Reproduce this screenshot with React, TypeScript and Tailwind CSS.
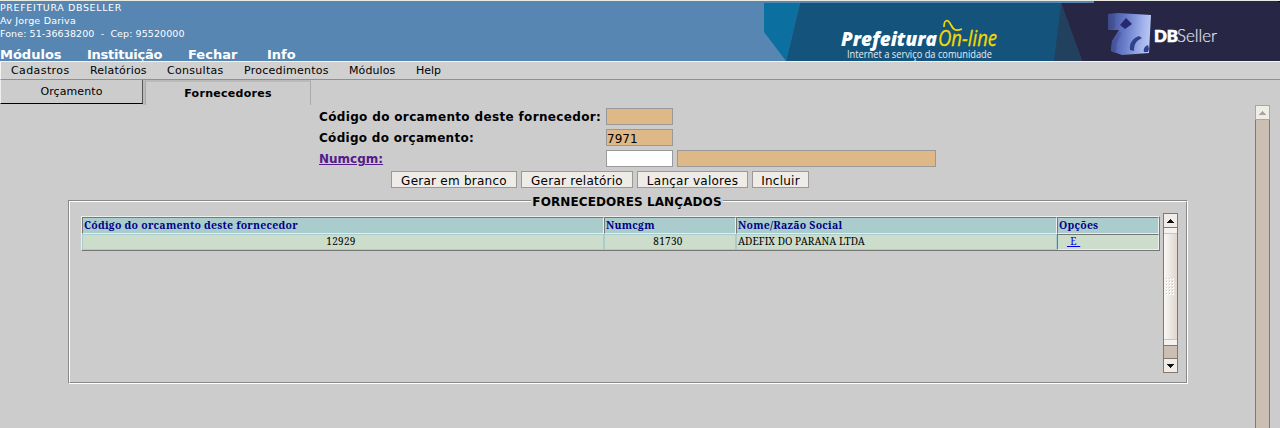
import React from "react";

const modules: [string, string][] = [
  ["Módulos", "w-[87px]"],
  ["Instituição", "w-[101px] tracking-[-0.25px]"],
  ["Fechar", "w-[79px]"],
  ["Info", "w-[60px]"],
];

const menu: [string, string][] = [
  ["Cadastros", "w-[79px] tracking-[0.4px]"],
  ["Relatórios", "w-[77px] tracking-[0.2px]"],
  ["Consultas", "w-[77px] tracking-[0.3px]"],
  ["Procedimentos", "w-[105px] tracking-[0.25px]"],
  ["Módulos", "w-[67px] tracking-[0.1px]"],
  ["Help", "w-[50px]"],
];

const buttons: [string, string][] = [
  ["Gerar em branco", "w-[126px]"],
  ["Gerar relatório", "w-[112px]"],
  ["Lançar valores", "w-[111px]"],
  ["Incluir", "w-[57px]"],
];

function Banner() {
  return (
    <svg width="516" height="60" viewBox="764 1 516 60" className="block shrink-0">
      <defs>
        <linearGradient id="cube" x1="0" y1="0.3" x2="1" y2="0.4">
          <stop offset="0" stopColor="#3f4c9a" />
          <stop offset="0.45" stopColor="#6c80cc" />
          <stop offset="0.85" stopColor="#a8b8ee" />
          <stop offset="1" stopColor="#b9c8f5" />
        </linearGradient>
        <linearGradient id="side" x1="0" y1="0" x2="1" y2="0">
          <stop offset="0" stopColor="#3c4888" />
          <stop offset="1" stopColor="#5565b4" />
        </linearGradient>
      </defs>
      <path d="M764 3H800L786 61L764 32Z" fill="#0b709f" />
      <path d="M800 3H1061L1082 61H786Z" fill="#14547c" />
      <path d="M1061 3L1054 61H1082Z" fill="#22415f" />
      <path d="M1061 3H1094V1H1280V61H1082Z" fill="#272645" />
      <path d="M1278 1H1280V2H1278Z" fill="#000" />
      <path d="M1108 14L1118 13L1151 15L1149 53L1122 55L1111 51L1112 41L1119 30L1108 30Z" fill="url(#cube)" />
      <path d="M1108 14L1115 15V29L1108 30ZM1112 41L1119 31L1122 33L1117 43L1116 53L1111 51Z" fill="url(#side)" />
      <path d="M1126 18L1132 24L1125 29L1120 25Z" fill="#262a6c" />
      <path d="M1133 50C1132 44 1135 39 1141 37" fill="none" stroke="#c0cdf6" strokeWidth="1.5" />
      <path d="M1130 50C1129 43 1133 38 1139 36L1142 38C1136 41 1134 44 1134 51ZM1144 52C1143 49 1145 46 1148 45L1149 49L1148 52Z" fill="#30418c" />
      <text x="841" y="46" textLength="96" lengthAdjust="spacingAndGlyphs" fill="#fff" fontFamily="Open Sans, sans-serif" fontWeight="800" fontStyle="italic" fontSize="20">Prefeitura</text>
      <text x="938" y="46" textLength="59" lengthAdjust="spacingAndGlyphs" fill="#f3d900" stroke="#f3d900" strokeWidth="0.3" fontFamily="Open Sans, sans-serif" fontStyle="italic" fontSize="21">On-line</text>
      <path d="M944 27C944 19 948 19 951 25C954 31 957 31 962 29" fill="none" stroke="#f3d900" strokeWidth="1.7" />
      <text x="847" y="58" textLength="145" lengthAdjust="spacingAndGlyphs" fill="#e4eef5" fontFamily="Open Sans, sans-serif" fontWeight="500" fontSize="10.5">Internet a serviço da comunidade</text>
      <text x="1154" y="42" textLength="24" lengthAdjust="spacingAndGlyphs" fill="#fff" stroke="#fff" strokeWidth="0.7" fontFamily="Lato, sans-serif" fontWeight="900" fontSize="17">DB</text>
      <text x="1177" y="42" textLength="40" lengthAdjust="spacingAndGlyphs" fill="#e2e2ea" stroke="#e2e2ea" strokeWidth="0.2" fontFamily="Lato, sans-serif" fontWeight="300" fontSize="17.5">Seller</text>
    </svg>
  );
}

function Arrow({ down = false, muted = false }: { down?: boolean; muted?: boolean }) {
  return (
    <svg width="7" height="4" viewBox="0 0 7 4" className={down ? "rotate-180" : ""} shapeRendering="crispEdges">
      <path d="M3 0H4V1H5V2H6V3H7V4H0V3H1V2H2V1H3Z" fill={muted ? "#aaa59d" : "#111"} />
    </svg>
  );
}

function InnerScroll() {
  return (
    <div className="flex h-[160px] w-[15px] flex-col border border-[#85786b] bg-[#cbbfb4]">
      <div className="flex h-[14px] items-center justify-center border-b border-[#85786b] bg-[#f1ece7]"><Arrow /></div>
      <div className="flex h-[118px] flex-col items-center justify-between border-b border-[#85786b] bg-linear-to-r from-[#faf8f6] to-[#dfd6cd]">
        <div className="h-[6px] w-full border-b border-[#c9c4bf] bg-[#f4f2ef]" />
        <svg width="9" height="18" className="block" shapeRendering="crispEdges">
          <defs>
            <pattern id="grip" width="3" height="3" patternUnits="userSpaceOnUse">
              <path d="M0 0H2V2H0Z" fill="#fff" /><path d="M0 0H1V1H0Z" fill="#c9c1b8" />
            </pattern>
          </defs>
          <rect width="9" height="18" fill="url(#grip)" />
        </svg>
        <div className="h-[6px] w-full border-t border-[#c9c4bf] bg-[#f4f2ef]" />
      </div>
      <div className="h-[13px] border-b border-[#85786b]" />
      <div className="flex h-[13px] items-center justify-center bg-[#f1ece7]"><Arrow down /></div>
    </div>
  );
}

const head = "h-[17px] border border-t-[#777] border-l-[#777] border-r-[#eee] border-b-[#e5eeee] bg-[#aacccc] pl-[1px] text-[10.5px] leading-[15px] font-bold tracking-[0.22px] text-[#000088]";
const cell = "h-[16px] border border-[#aacccc] bg-[#ccddcc] leading-[12px]";

export default function App() {
  return (
    <div className="flex h-[428px] w-[1280px] flex-col overflow-hidden bg-[#cccccc] font-['DejaVu_Sans',sans-serif] whitespace-nowrap text-black">
      <header className="flex h-[61px] shrink-0 justify-between border-t border-[#e8ebe3] bg-[#5786b2] text-white">
        <div className="w-[400px]">
          <div className="text-[9.5px] leading-[13px]">
            <p className="tracking-[0.63px]">PREFEITURA DBSELLER</p>
            <p className="tracking-[0.2px]">Av Jorge Dariva</p>
            <p className="tracking-[0.09px] whitespace-pre">Fone: 51-36638200  -  Cep: 95520000</p>
          </div>
          <nav className="mt-[7px] flex text-[13px] leading-[16px] font-bold">
            {modules.map(([label, width]) => <span key={label} className={width}>{label}</span>)}
          </nav>
        </div>
        <Banner />
      </header>

      <nav className="flex h-[19px] shrink-0 border-t border-b border-l border-t-[#f4f4f4] border-b-[#909090] border-l-[#f4f4f4] bg-[#d0d0d0] pl-[10px] text-[11px] leading-[17px]">
        {menu.map(([label, width], i) => <span key={i} className={width}>{label}</span>)}
      </nav>

      <div className="flex min-h-0 flex-1">
        <main className="w-[1255px]">
          <div className="flex h-[25px] text-[11px]">
            <div className="h-[24px] w-[143px] border-r border-b border-l border-r-[#555] border-b-black border-l-[#eee] text-center leading-[23px] tracking-[0.1px]">Orçamento</div>
            <div className="w-[2px] bg-[#bababa]" />
            <div className="h-[25px] w-[166px] border-t-2 border-r border-l border-t-[#bababa] border-r-[#aaa] border-l-[#aaa] text-center leading-[23px] font-bold tracking-[0.27px]">Fornecedores</div>
          </div>

          <div className="mt-[3px] ml-[319px] grid grid-cols-[287px_1fr] gap-y-1 text-[12px] leading-[18px] font-bold">
            <span className="h-[17px] tracking-[0.35px]">Código do orcamento deste fornecedor:</span>
            <div className="h-[17px] w-[67px] border border-[#999] bg-[#deb887]" />
            <span className="h-[17px] tracking-[0.3px]">Código do orçamento:</span>
            <div className="h-[17px] w-[67px] border border-[#999] bg-[#deb887] font-normal">7971</div>
            <a className="h-[17px] text-[#551a8b] underline">Numcgm:</a>
            <div className="flex gap-1">
              <div className="h-[17px] w-[67px] border border-[#999] bg-white" />
              <div className="h-[17px] w-[259px] border border-[#999] bg-[#deb887]" />
            </div>
          </div>

          <div className="mt-1 ml-[391px] flex gap-1 text-[12px]">
            {buttons.map(([label, width]) => (
              <button key={label} className={`${width} h-[17px] border border-[#999] bg-[#efebe7] pt-px leading-[16px] tracking-[0.25px]`}>{label}</button>
            ))}
          </div>

          <section className="relative mt-[12px] ml-[68px] h-[184px] w-[1120px] border border-t-[#888] border-r-white border-b-white border-l-[#888]">
            <h2 className="absolute -top-[8px] left-[462px] w-[192px] bg-[#cccccc] text-center text-[12px] leading-[18px] font-bold tracking-[0.1px]">FORNECEDORES LANÇADOS</h2>
            <div className="flex h-full border border-t-white border-r-[#888] border-b-[#888] border-l-white pt-[11px] pl-[11px]">
              <div className="mt-[3px] grid h-[35px] w-[1079px] grid-cols-[522px_132px_321px_102px] border border-t-[#eee] border-r-[#777] border-b-[#777] border-l-[#eee] font-['Noto_Serif','DejaVu_Serif',serif] text-[10px]">
                <div className={head}>Código do orcamento deste fornecedor</div>
                <div className={head}>Numcgm</div>
                <div className={head}>Nome/Razão Social</div>
                <div className={head}>Opções</div>
                <div className={`${cell} pr-[4px] text-center tracking-[0.3px]`}>12929</div>
                <div className={`${cell} pr-[4px] text-center tracking-[0.3px]`}>81730</div>
                <div className={`${cell} pl-[1px] tracking-[0.05px]`}>ADEFIX DO PARANA LTDA</div>
                <div className="h-[16px] border border-t-[#777] border-r-[#eee] border-b-[#eee] border-l-[#777] bg-[#ccddcc] pl-[9px] leading-[13px]"><a className="tracking-[0.6px] whitespace-pre text-[#0000ee] underline"> E </a></div>
              </div>
              <div className="ml-[3px]"><InnerScroll /></div>
            </div>
          </section>
        </main>

        <div className="mt-[25px] flex w-[15px] flex-col border-x border-[#85786b] bg-[#cbbfb4]">
          <div className="-mx-px flex h-[15px] shrink-0 items-center justify-center border border-[#b2a494] bg-[#efede6]"><Arrow muted /></div>
        </div>
      </div>
    </div>
  );
}
